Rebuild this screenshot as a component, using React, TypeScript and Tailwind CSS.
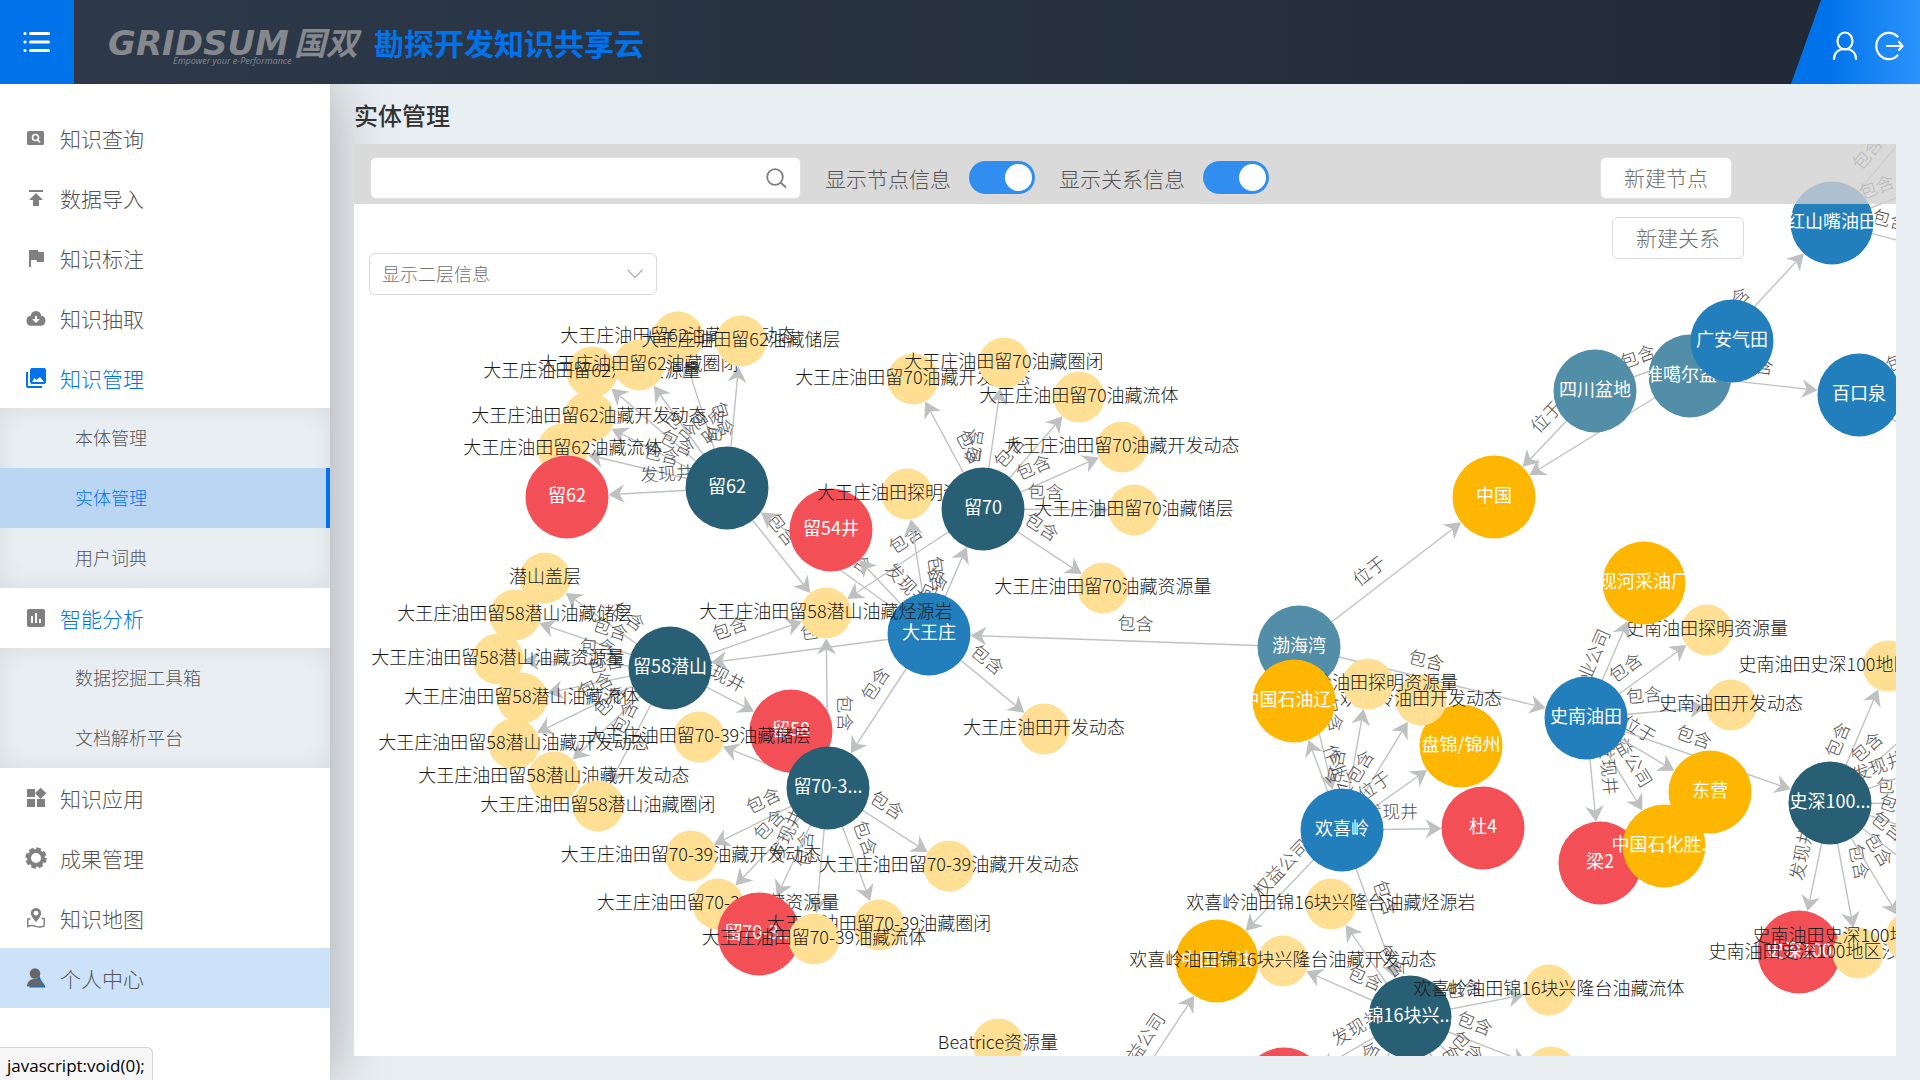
import React, { useState } from 'react';
import { MdAssessment, MdFlag, MdPublish, MdWidgets } from 'react-icons/md';

type Kind = 'reserve' | 'well' | 'pool' | 'field' | 'basin' | 'org';

interface GraphNode {
  id: string;
  kind: Kind;
  x: number;
  y: number;
  label: string;
}

const FILL: Record<Kind, string> = {
  reserve: '#ffdf94',
  well: '#f25056',
  pool: '#285f74',
  field: '#237ebc',
  basin: '#538ea8',
  org: '#fdb602',
};

const node = (id: string, kind: Kind, x: number, y: number, label: string): GraphNode => ({ id, kind, x, y, label });

// later nodes are painted over earlier ones
const NODES: GraphNode[] = [
  // 留62
  node('l62a', 'reserve', 678, 337, '大王庄油田留62油藏开发动态'),
  node('l62c', 'reserve', 592, 372, '大王庄油田留62油藏资源量'),
  node('l62d', 'reserve', 639, 365, '大王庄油田留62油藏圈闭'),
  node('l62b', 'reserve', 741, 341, '大王庄油田留62油藏储层'),
  node('l62e', 'reserve', 589, 417, '大王庄油田留62油藏开发动态'),
  node('l62f', 'reserve', 563, 449, '大王庄油田留62油藏流体'),
  node('w62', 'well', 567, 497, '留62'),
  node('l62', 'pool', 727, 488, '留62'),
  // 留70
  node('l70a', 'reserve', 913, 379, '大王庄油田留70油藏开发动态'),
  node('l70b', 'reserve', 1004, 363, '大王庄油田留70油藏圈闭'),
  node('l70c', 'reserve', 1079, 397, '大王庄油田留70油藏流体'),
  node('l70d', 'reserve', 1122, 447, '大王庄油田留70油藏开发动态'),
  node('l70e', 'reserve', 1134, 510, '大王庄油田留70油藏储层'),
  node('l70f', 'reserve', 1103, 588, '大王庄油田留70油藏资源量'),
  node('w54', 'well', 831, 530, '留54井'),
  node('dwzT', 'reserve', 907, 494, '大王庄油田探明资源量'),
  node('l70', 'pool', 983, 509, '留70'),
  // 大王庄
  node('dwz', 'field', 929, 634, '大王庄'),
  node('src', 'reserve', 826, 613, '大王庄油田留58潜山油藏烃源岩'),
  node('dwzK', 'reserve', 1044, 729, '大王庄油田开发动态'),
  // 留58潜山
  node('l58a', 'reserve', 545, 578, '潜山盖层'),
  node('l58b', 'reserve', 515, 615, '大王庄油田留58潜山油藏储层'),
  node('l58c', 'reserve', 498, 659, '大王庄油田留58潜山油藏资源量'),
  node('l58d', 'reserve', 522, 698, '大王庄油田留58潜山油藏流体'),
  node('l58e', 'reserve', 514, 744, '大王庄油田留58潜山油藏开发动态'),
  node('l58f', 'reserve', 554, 777, '大王庄油田留58潜山油藏开发动态'),
  node('l58g', 'reserve', 598, 806, '大王庄油田留58潜山油藏圈闭'),
  node('l58', 'pool', 670, 668, '留58潜山'),
  node('w58', 'well', 791, 731, '留58'),
  // 留70-39
  node('l39a', 'reserve', 699, 737, '大王庄油田留70-39油藏储层'),
  node('l39', 'pool', 828, 788, '留70-3...'),
  node('l39b', 'reserve', 691, 856, '大王庄油田留70-39油藏开发动态'),
  node('l39c', 'reserve', 949, 866, '大王庄油田留70-39油藏开发动态'),
  node('l39d', 'reserve', 718, 904, '大王庄油田留70-39油藏资源量'),
  node('w39', 'well', 759, 934, '留70-3...'),
  node('l39e', 'reserve', 879, 925, '大王庄油田留70-39油藏圈闭'),
  node('l39f', 'reserve', 814, 939, '大王庄油田留70-39油藏流体'),
  node('bea', 'reserve', 998, 1044, 'Beatrice资源量'),
  node('beaF', 'field', 1117, 1113, ''),
  // 渤海湾, 欢喜岭
  node('bhw', 'basin', 1299, 647, '渤海湾'),
  node('pj', 'org', 1461, 746, '盘锦/锦州'),
  node('hxlK', 'reserve', 1421, 700, '欢喜岭油田开发动态'),
  node('hxlT', 'reserve', 1368, 684, '欢喜岭油田探明资源量'),
  node('lh', 'org', 1294, 701, '中国石油辽...'),
  node('hxl', 'field', 1342, 830, '欢喜岭'),
  node('d4', 'well', 1483, 828, '杜4'),
  node('j16a', 'reserve', 1331, 904, '欢喜岭油田锦16块兴隆台油藏烃源岩'),
  node('zsy', 'org', 1217, 961, '中国石油'),
  node('j16b', 'reserve', 1283, 961, '欢喜岭油田锦16块兴隆台油藏开发动态'),
  node('j16', 'pool', 1410, 1017, '锦16块兴...'),
  node('j16c', 'reserve', 1549, 990, '欢喜岭油田锦16块兴隆台油藏流体'),
  node('j16w', 'well', 1284, 1089, ''),
  node('j16d', 'reserve', 1551, 1072, ''),
  node('j16e', 'reserve', 1520, 1120, ''),
  node('j16f', 'reserve', 1483, 1149, ''),
  node('j16g', 'reserve', 1340, 1140, ''),
  // 中国
  node('cn', 'org', 1494, 497, '中国'),
  node('zge', 'basin', 1690, 376, '准噶尔盆地'),
  node('sc', 'basin', 1595, 391, '四川盆地'),
  node('ga', 'field', 1732, 341, '广安气田'),
  node('hsz', 'field', 1832, 223, '红山嘴油田'),
  node('bkq', 'field', 1859, 395, '百口泉'),
  node('hszA', 'pool', 1957, 74, ''),
  node('hszB', 'pool', 1973, 168, ''),
  node('hszC', 'pool', 1980, 262, ''),
  node('bkqA', 'pool', 1999, 341, ''),
  node('bkqB', 'pool', 1980, 482, ''),
  // 史南油田
  node('snT', 'reserve', 1707, 630, '史南油田探明资源量'),
  node('xh', 'org', 1644, 583, '现河采油厂'),
  node('snK', 'reserve', 1731, 705, '史南油田开发动态'),
  node('sn', 'field', 1586, 718, '史南油田'),
  node('l2', 'well', 1600, 863, '梁2'),
  node('sl', 'org', 1664, 846, '中国石化胜...'),
  node('dy', 'org', 1710, 792, '东营'),
  node('s100', 'pool', 1830, 803, '史深100...'),
  node('s100a', 'reserve', 1888, 666, '史南油田史深100地区沙三中油藏储层'),
  node('w100', 'well', 1799, 952, '史深100'),
  node('s100b', 'reserve', 1858, 953, '史南油田史深100地区沙三中油藏流体'),
  node('s100c', 'reserve', 1911, 937, '史南油田史深100地区沙三中油藏资源量'),
  node('s100d', 'reserve', 1946, 700, ''),
  node('s100w', 'well', 1978, 748, ''),
  node('s100e', 'reserve', 1985, 804, ''),
  node('s100f', 'reserve', 1978, 850, ''),
  node('s100g', 'reserve', 1945, 893, ''),
];

const BY_ID = new Map(NODES.map((n) => [n.id, n]));

// source, label, targets
const LINKS: [string, string, string[]][] = [
  ['l62', '包含', ['l62a', 'l62b', 'l62c', 'l62d', 'l62e', 'l62f', 'src']],
  ['l62', '发现井', ['w62']],
  ['l70', '包含', ['l70a', 'l70b', 'l70c', 'l70d', 'l70e', 'l70f', 'src']],
  ['dwz', '包含', ['l62', 'l70', 'l58', 'l39', 'dwzT', 'dwzK']],
  ['dwz', '发现井', ['w54']],
  ['l58', '包含', ['l58a', 'l58b', 'l58c', 'l58d', 'l58e', 'l58f', 'l58g', 'src']],
  ['l58', '发现井', ['w58']],
  ['l39', '包含', ['l39a', 'l39b', 'l39c', 'l39d', 'l39e', 'l39f', 'src']],
  ['l39', '发现井', ['w39']],
  ['bhw', '包含', ['dwz', 'hxl', 'sn']],
  ['bhw', '位于', ['cn']],
  ['hxl', '包含', ['hxlT', 'hxlK', 'j16']],
  ['hxl', '作业公司', ['lh']],
  ['hxl', '权益公司', ['zsy']],
  ['hxl', '位于', ['pj']],
  ['hxl', '发现井', ['d4']],
  ['j16', '包含', ['j16a', 'j16b', 'j16c', 'j16d', 'j16e', 'j16f', 'j16g']],
  ['j16', '发现井', ['j16w']],
  ['beaF', '权益公司', ['zsy']],
  ['beaF', '包含', ['bea']],
  ['sc', '位于', ['cn']],
  ['sc', '包含', ['ga']],
  ['zge', '位于', ['cn']],
  ['zge', '包含', ['hsz', 'bkq']],
  ['hsz', '包含', ['hszA', 'hszB', 'hszC']],
  ['bkq', '包含', ['bkqA', 'bkqB']],
  ['sn', '包含', ['snT', 'snK', 's100']],
  ['sn', '作业公司', ['xh']],
  ['sn', '权益公司', ['sl']],
  ['sn', '位于', ['dy']],
  ['sn', '发现井', ['l2']],
  ['s100', '包含', ['s100a', 's100b', 's100c', 's100d', 's100e', 's100f', 's100g']],
  ['s100', '发现井', ['w100', 's100w']],
];

const radius = (n: GraphNode) => (n.kind === 'reserve' ? 25.5 : 41.5);

interface LinkProps {
  from: GraphNode;
  to: GraphNode;
  label: string;
  showLabel: boolean;
}

const Link: React.FC<LinkProps> = ({ from, to, label, showLabel }) => {
  const dx = to.x - from.x;
  const dy = to.y - from.y;
  const len = Math.hypot(dx, dy);
  const angle = (Math.atan2(dy, dx) * 180) / Math.PI;
  const end = len - radius(to);
  const mid = (radius(from) + end) / 2 - 21;
  const flipped = dx < 0;

  return (
    <g transform={`translate(${from.x} ${from.y}) rotate(${angle})`}>
      <line x1={0} y1={0} x2={end - 8} y2={0} stroke="#c0c2c2" strokeWidth={1.4} />
      <path d="M0 0 L-16 -9.5 L-11 0 L-16 9.5 Z" transform={`translate(${end} 0)`} fill="#bfc1c1" />
      {showLabel && (
        <g transform={`translate(${mid} 0) rotate(${flipped ? 180 : 0})`}>
          <text y={-11} textAnchor="middle" fill="#505050" fontSize={18}>
            {label}
          </text>
        </g>
      )}
    </g>
  );
};

const Graph: React.FC<{ nodeLabels: boolean; linkLabels: boolean }> = ({ nodeLabels, linkLabels }) => (
  <svg className="absolute inset-0 w-full h-full overflow-hidden font-light">
    <g transform="translate(-354 -144)">
      {LINKS.map(([source, label, targets]) =>
        targets.map((target) => (
          <Link
            key={source + target}
            from={BY_ID.get(source)!}
            to={BY_ID.get(target)!}
            label={label}
            showLabel={linkLabels}
          />
        ))
      )}
      {NODES.map((n) => (
        <g key={n.id}>
          <circle cx={n.x} cy={n.y} r={radius(n)} fill={FILL[n.kind]} />
          {nodeLabels && n.label && (
            <text
              x={n.x}
              y={n.y + 5}
              textAnchor="middle"
              fontSize={18}
              className={n.kind === 'reserve' ? 'fill-[#1a1a1a]' : 'fill-white font-normal'}
            >
              {n.label}
            </text>
          )}
        </g>
      ))}
    </g>
  </svg>
);

const SearchBoxIcon = () => (
  <svg width="18" height="14" viewBox="0 0 18 14">
    <rect width="17" height="14" rx="1.500" fill="currentColor" />
    <circle cx="8.500" cy="6.500" r="3" fill="none" stroke="#fff" strokeWidth="1.600" />
    <path d="M10.500 8.500L13 11.500" stroke="#fff" strokeWidth="1.600" />
  </svg>
);

const CloudIcon = () => (
  <svg width="20" height="15" viewBox="0 0 20 15">
    <path d="M10 0a5.500 5.500 0 0 1 5.200 4.800A5 5 0 0 1 19.500 10a4.800 4.800 0 0 1-4.800 4.800H5A4.800 4.800 0 0 1 .500 10a5 5 0 0 1 4.300-5.200A5.500 5.500 0 0 1 10 0z" fill="currentColor" />
    <path d="M9 5h2v3h3l-4 4-4-4h3z" fill="#fff" />
  </svg>
);

const GalleryIcon = () => (
  <svg width="20" height="20" viewBox="0 0 20 20" fill="currentColor">
    <path d="M0 4h2v14h14v2H2a2 2 0 0 1-2-2z" />
    <path d="M6 0h12a2 2 0 0 1 2 2v12a2 2 0 0 1-2 2H6a2 2 0 0 1-2-2V2a2 2 0 0 1 2-2z" />
    <path d="M6 14l2.500-4 2 2 3.500-3 4 5z" fill="#fff" />
  </svg>
);

const GearIcon = () => (
  <svg width="22" height="22" viewBox="0 0 22 22">
    <circle cx="11" cy="11" r="7" fill="none" stroke="currentColor" strokeWidth="4" />
    <circle cx="11" cy="11" r="9.200" fill="none" stroke="currentColor" strokeWidth="3" strokeDasharray="4.600 2.626" />
  </svg>
);

const MapIcon = () => (
  <svg width="18" height="20" viewBox="0 0 18 20" fill="none" stroke="currentColor">
    <path
      d="M9 0a5.200 5.200 0 0 1 5.200 5.200C14.200 8.500 9 14 9 14S3.800 8.500 3.800 5.200A5.200 5.200 0 0 1 9 0zM9 2.800a2.400 2.400 0 1 0 0 4.800 2.400 2.400 0 0 0 0-4.800z"
      fill="currentColor"
      fillRule="evenodd"
      stroke="none"
    />
    <path d="M3.500 11H.8v7.500c3-1.500 5-1.500 8-.2 3 1.200 5 1.200 8.400-.3V10.500h-2.700" strokeWidth="1.400" />
  </svg>
);

const PersonIcon = () => (
  <svg width="18" height="20" viewBox="0 0 18 20">
    <path d="M2 19.500h16v-2l-4-5.500-1.500-4z" fill="#0073eb" />
    <circle cx="8" cy="5.500" r="5.300" fill="#666" />
    <path d="M0 18.500c0-5 3-7.500 8-7.500s8.500 2.500 8.500 7.500z" fill="#666" />
  </svg>
);

interface MenuItem {
  label: string;
  icon: React.ReactNode;
  open?: boolean;
  iconActive?: boolean;
  hovered?: boolean;
  children?: { label: string; active?: boolean }[];
}

const MENU: MenuItem[] = [
  { label: '知识查询', icon: <SearchBoxIcon /> },
  { label: '数据导入', icon: <MdPublish size={24} /> },
  { label: '知识标注', icon: <MdFlag size={24} /> },
  { label: '知识抽取', icon: <CloudIcon /> },
  {
    label: '知识管理',
    icon: <GalleryIcon />,
    open: true,
    iconActive: true,
    children: [{ label: '本体管理' }, { label: '实体管理', active: true }, { label: '用户词典' }],
  },
  {
    label: '智能分析',
    icon: <MdAssessment size={24} />,
    open: true,
    children: [{ label: '数据挖掘工具箱' }, { label: '文档解析平台' }],
  },
  { label: '知识应用', icon: <MdWidgets size={24} /> },
  { label: '成果管理', icon: <GearIcon /> },
  { label: '知识地图', icon: <MapIcon /> },
  { label: '个人中心', icon: <PersonIcon />, hovered: true },
];

const Sidebar = () => (
  <nav className="w-[330px] shrink-0 bg-white pt-6 font-light shadow-[0_0_60px_rgba(0,0,0,0.3)]">
    <ul>
      {MENU.map((item) => (
        <li key={item.label}>
          <a
            href="#"
            className={`flex h-[60px] items-center text-[21px] ${item.open ? 'text-[#0073eb]' : 'text-[#555]'} ${item.hovered ? 'bg-[#cce2f9]' : ''}`}
          >
            <span className={`ml-6 flex w-6 justify-center ${item.iconActive ? 'text-[#0073eb]' : 'text-[#808080]'}`}>
              {item.icon}
            </span>
            <span className="ml-3 pt-[2px]">{item.label}</span>
          </a>
          {item.children && (
            <ul className="bg-[#e9eef2] shadow-[inset_0_0_24px_rgba(0,0,0,0.08)]">
              {item.children.map((child) => (
                <li key={child.label}>
                  <a
                    href="#"
                    className={`flex h-[60px] items-center pb-[2px] pl-[75px] text-lg ${child.active ? 'border-r-4 border-[#0073eb] bg-[#bad6f2] text-[#0073eb]' : 'text-[#555]'}`}
                  >
                    {child.label}
                  </a>
                </li>
              ))}
            </ul>
          )}
        </li>
      ))}
    </ul>
  </nav>
);

const Header = () => (
  <header className="relative z-10 flex h-[84px] shrink-0 items-center bg-linear-to-r from-[#2e3a4b] to-[#202935]">
    <button aria-label="菜单" className="flex h-full w-[74px] items-center justify-center bg-[#0073eb]">
      <svg width="28" height="22" viewBox="0 0 28 22" stroke="#fff" strokeWidth="3.200" strokeLinecap="round">
        <path d="M7.500 2.500H25.500M7.500 11H25.500M7.500 19.500H25.500M2 2.500h.01M2 11h.01M2 19.500h.01" />
      </svg>
    </button>
    <svg className="ml-8" width="264" height="48" viewBox="0 0 264 48" fill="#85888c">
      <text x="2" y="37" fontSize="34" fontWeight="700" fontStyle="italic" fontFamily="DejaVu Sans">
        GRIDSUM
      </text>
      <text x="188" y="37" fontSize="32" fontWeight="700" fontStyle="italic" fontFamily="Noto Sans CJK SC">
        国双
      </text>
      <text x="67" y="46" fontSize="9" fontWeight="500" fontStyle="italic" fontFamily="Open Sans">
        Empower your e-Performance
      </text>
    </svg>
    <h1 className="ml-1 text-3xl font-bold text-[#0073eb]">勘探开发知识共享云</h1>
    <div className="ml-auto flex h-full w-[129px] items-center bg-linear-to-r from-[#0073eb] from-30% to-[#2994fb] pl-[41px] [clip-path:polygon(30px_0,100%_0,100%_100%,0_100%)]">
      <button aria-label="用户" className="mt-2">
        <svg width="26" height="30" viewBox="0 0 26 30" fill="none" stroke="#fff" strokeWidth="2.200" strokeLinecap="round">
          <ellipse cx="13" cy="10" rx="7.500" ry="8.500" />
          <path d="M2 28c0-6 4-10 11-10s11 4 11 10" />
        </svg>
      </button>
      <button aria-label="退出" className="ml-4 mt-2">
        <svg width="30" height="30" viewBox="0 0 30 30" fill="none" stroke="#fff" strokeWidth="2.200" strokeLinecap="round" strokeLinejoin="round">
          <path d="M23.500 5.500a12.500 13.200 0 1 0 0 19M13 15h15M25 11l3.500 4-3.500 4" />
        </svg>
      </button>
    </div>
  </header>
);

interface ToggleProps {
  label: string;
  checked: boolean;
  onChange: (value: boolean) => void;
}

const Toggle: React.FC<ToggleProps> = ({ label, checked, onChange }) => (
  <label className="ml-6 flex items-center gap-[18px] whitespace-nowrap text-[21px] font-light text-[#555]">
    <span className="pt-[2px]">{label}</span>
    <input
      type="checkbox"
      checked={checked}
      onChange={(e) => onChange(e.target.checked)}
      className="h-[33px] w-[66px] cursor-pointer appearance-none rounded-full bg-[#bfbfbf] p-[3px] before:block before:size-[27px] before:rounded-full before:bg-white checked:bg-[#318eee] checked:before:ml-auto"
    />
  </label>
);

export default function App() {
  const [nodeLabels, setNodeLabels] = useState(true);
  const [linkLabels, setLinkLabels] = useState(true);

  return (
    <div className="flex min-h-screen flex-col bg-[#e9eef2] font-['Noto_Sans_CJK_SC',sans-serif]">
      <Header />
      <div className="flex flex-1">
        <Sidebar />
        <main className="flex min-w-0 flex-1 flex-col px-6 pb-6">
          <h2 className="relative flex h-[60px] items-center pt-[2px] text-2xl font-medium text-[#333]">实体管理</h2>
          <section className="relative flex-1 overflow-hidden bg-white">
            <Graph nodeLabels={nodeLabels} linkLabels={linkLabels} />

            <div className="relative flex h-[60px] items-center bg-[#d1d1d1]/80 pl-4 pt-[7px]">
              <div className="relative w-[431px]">
                <input
                  type="text"
                  aria-label="搜索"
                  className="h-[42px] w-full rounded-md border border-[#e0e0e0] bg-white pl-3 pr-12 text-lg outline-none"
                />
                <svg className="absolute right-[14px] top-[11px]" width="21" height="21" viewBox="0 0 21 21" fill="none" stroke="#808080" strokeWidth="1.800">
                  <circle cx="9" cy="9" r="7.800" />
                  <path d="M14.500 14.500L20 19.500" />
                </svg>
              </div>
              <Toggle label="显示节点信息" checked={nodeLabels} onChange={setNodeLabels} />
              <Toggle label="显示关系信息" checked={linkLabels} onChange={setLinkLabels} />
              <button className="ml-auto mr-[164px] h-[42px] w-[132px] rounded-md border border-[#e0e0e0] bg-white text-[21px] font-light text-[#707070]">
                新建节点
              </button>
            </div>

            <div className="relative flex items-start justify-between pl-[15px] pr-[152px] pt-[13px]">
              <div className="relative mt-9 w-[288px]">
                <select
                  aria-label="显示层级"
                  className="h-[42px] w-full appearance-none rounded-md border border-[#d9d9d9] bg-white px-3 pb-[2px] text-lg font-light text-[#707070] outline-none"
                >
                  <option>显示二层信息</option>
                </select>
                <svg className="pointer-events-none absolute right-[14px] top-4" width="16" height="10" viewBox="0 0 16 10" fill="none" stroke="#b0b0b0" strokeWidth="1.300">
                  <path d="M.5.800L8 8.500 15.500.800" />
                </svg>
              </div>
              <button className="h-[42px] w-[132px] rounded-md border border-[#d9d9d9] bg-white text-[21px] font-light text-[#707070]">
                新建关系
              </button>
            </div>
          </section>
        </main>
      </div>
      <div className="fixed bottom-0 left-0 z-20 rounded-tr-md border-r border-t border-[#d4d4d4] bg-[#f6f6f6] px-[7px] pt-1 font-['Open_Sans',sans-serif] text-[17px] leading-7 text-black">
        javascript:void(0);
      </div>
    </div>
  );
}
